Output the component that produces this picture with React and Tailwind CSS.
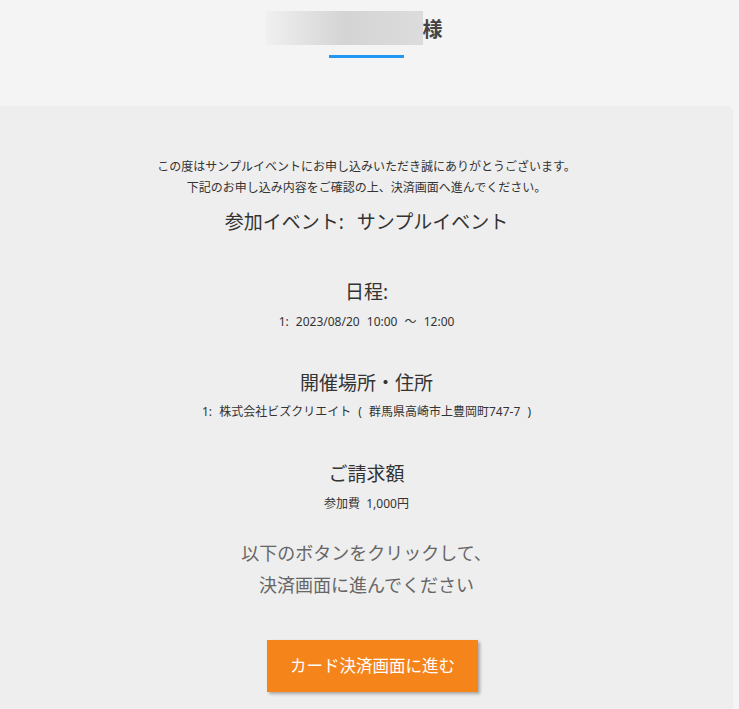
export default function App() {
  return (
    <div
      className="min-h-[709px] bg-[#f4f4f4] text-[#333]"
      style={{ fontFamily: '"Noto Sans", "Noto Sans CJK JP", sans-serif' }}
    >
      <header className="h-[106px] pt-[15px] flex flex-col items-center w-[733px]">
        <h1 className="flex items-center h-[30px] text-[20px] font-bold leading-[30px] text-[#444]">
          <span className="relative inline-block w-[132px] h-[34px]">
            <span className="absolute -left-[25px] -top-[2px] w-[157px] h-[34px] bg-linear-to-r from-[#f0f0f0] via-[#d4d4d4] to-[#dcdcdc]" />
          </span>
          <span>様</span>
        </h1>
        <div className="mt-[10px] h-[3px] w-[75px] bg-[#2196f3]" />
      </header>

      <main className="w-[733px] rounded-tr-md bg-[#eeeeee] pt-[50px] pb-[17px] flex flex-col items-center text-center">
        <p className="text-[12px] leading-[21px]">
          この度はサンプルイベントにお申し込みいただき誠にありがとうございます。
          <br />
          下記のお申し込み内容をご確認の上、決済画面へ進んでください。
        </p>
        <h2 className="mt-[10px] text-[19px] leading-[28px] [word-spacing:8px]">参加イベント: サンプルイベント</h2>

        <h3 className="mt-[42px] text-[19px] leading-[28px]">日程:</h3>
        <p className="mt-[6px] text-[12px] leading-[20px] [word-spacing:4px]">1: 2023/08/20 10:00 〜 12:00</p>

        <h3 className="mt-[37px] text-[19px] leading-[28px]">開催場所・住所</h3>
        <p className="mt-[5px] text-[12px] leading-[20px] [word-spacing:4px]">1: 株式会社ビズクリエイト ( 群馬県高崎市上豊岡町747-7 )</p>

        <h3 className="mt-[38px] text-[19px] leading-[28px]">ご請求額</h3>
        <p className="mt-[6px] text-[12px] leading-[20px] [word-spacing:3px]">参加費 1,000円</p>

        <p className="mt-[23px] text-[18px] leading-[32px] text-[#666]">
          以下のボタンをクリックして、
          <br />
          決済画面に進んでください
        </p>

        <button className="mt-[39px] ml-[12px] w-[211px] h-[52px] bg-[#f5841a] text-white text-[16.5px] shadow-[2px_2px_3px_rgba(0,0,0,0.3)]">
          カード決済画面に進む
        </button>
      </main>
    </div>
  )
}
